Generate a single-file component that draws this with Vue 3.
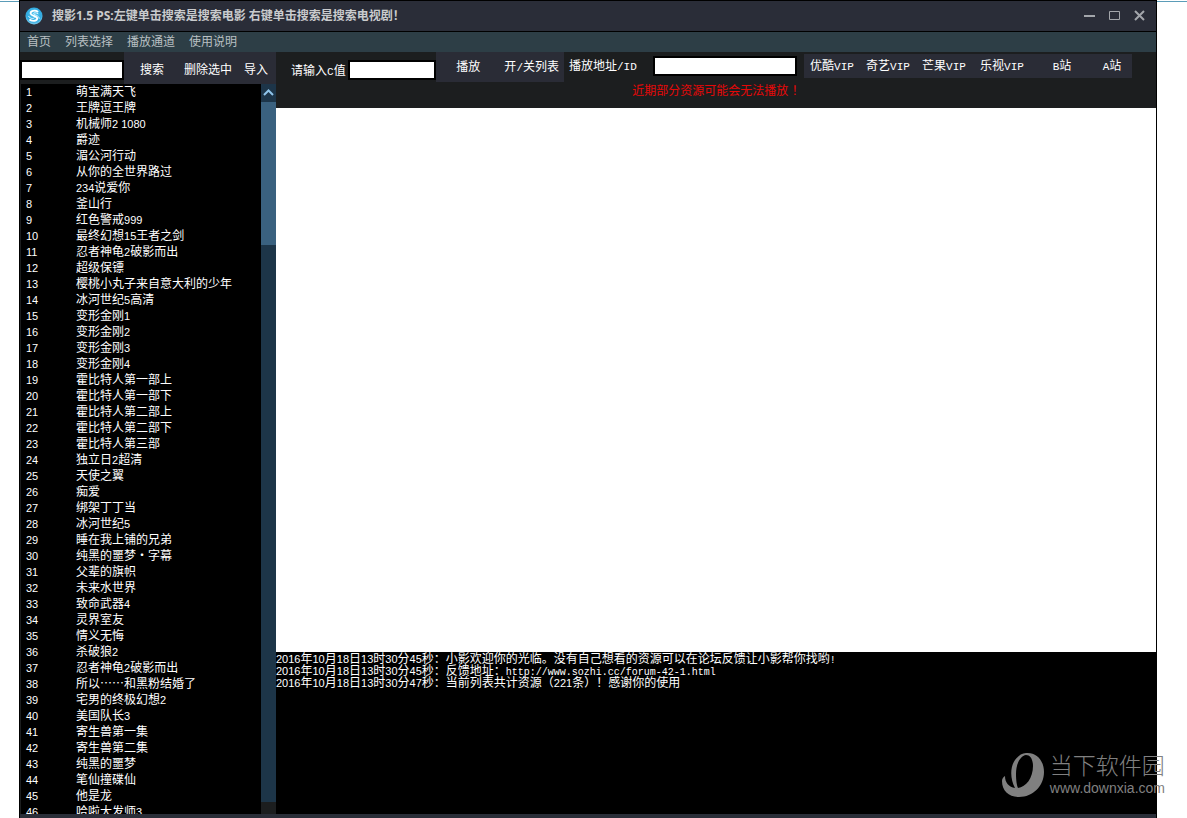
<script setup>
import { h, ref } from 'vue'

const menus = ['首页', '列表选择', '播放通道', '使用说明']

const vipButtons = [
  { label: '优酷VIP' },
  { label: '奇艺VIP' },
  { label: '芒果VIP' },
  { label: '乐视VIP', size: 'wide' },
  { label: 'B站', size: 'wide' },
  { label: 'A站', size: 'narrow' },
]

const movies = [
  '萌宝满天飞', '王牌逗王牌', '机械师2 1080', '爵迹', '湄公河行动', '从你的全世界路过',
  '234说爱你', '釜山行', '红色警戒999', '最终幻想15王者之剑', '忍者神龟2破影而出', '超级保镖',
  '樱桃小丸子来自意大利的少年', '冰河世纪5高清', '变形金刚1', '变形金刚2', '变形金刚3', '变形金刚4',
  '霍比特人第一部上', '霍比特人第一部下', '霍比特人第二部上', '霍比特人第二部下', '霍比特人第三部',
  '独立日2超清', '天使之翼', '痴爱', '绑架丁丁当', '冰河世纪5', '睡在我上铺的兄弟', '纯黑的噩梦・字幕',
  '父辈的旗帜', '未来水世界', '致命武器4', '灵界室友', '情义无悔', '杀破狼2', '忍者神龟2破影而出',
  '所以……和黑粉结婚了', '宅男的终极幻想2', '美国队长3', '寄生兽第一集', '寄生兽第二集', '纯黑的噩梦',
  '笔仙撞碟仙', '他是龙', '哈啦大发师3',
]

const logs = [
  '2016年10月18日13时30分45秒：小影欢迎你的光临。没有自己想看的资源可以在论坛反馈让小影帮你找哟!',
  '2016年10月18日13时30分45秒：反馈地址：http://www.sozhi.cc/forum-42-1.html',
  '2016年10月18日13时30分47秒：当前列表共计资源（221条）！感谢你的使用',
]

const keyword = ref('')
const cValue = ref('')
const address = ref('')

// Sets half-width runs in half-width faces so they pair with full-width characters.
const MixedText = (props) =>
  props.text
    .split(/([\x20-\x7e]+|…+)/)
    .filter(Boolean)
    .map((run) => {
      if (/^…+$/.test(run)) return h('span', { class: 'run-wide' }, run)
      if (/^[\d ]+$/.test(run)) return h('span', { class: 'run-digits' }, run)
      if (/^[\x20-\x7e]+$/.test(run)) return h('span', { class: 'run-latin' }, run)
      return run
    })
MixedText.props = ['text']
</script>

<template>
  <div class="desktop">
    <div class="window">
      <header class="titlebar">
        <svg class="logo" viewBox="0 0 18 18" aria-hidden="true">
          <defs>
            <radialGradient id="orb" cx="50%" cy="40%" r="62%">
              <stop offset="0" stop-color="#55c8f2" />
              <stop offset="0.7" stop-color="#2fa9e0" />
              <stop offset="1" stop-color="#8fd6f2" />
            </radialGradient>
          </defs>
          <circle cx="9" cy="9" r="8.5" fill="url(#orb)" />
          <path d="M12.6 4.600C10 2.900 5.200 3.800 5.600 6.600C6 9 12 8.600 12.200 11.300C12.300 14 8 14.600 5 12.900" fill="none" stroke="#fff" stroke-width="1.800" stroke-linecap="round" />
          <path d="M13 6.600C11 5.400 8.400 5.600 8.600 6.700C9 8 14.400 8.400 14.200 11.400M3.600 9.300C4.600 11.600 8.800 12.200 9.400 10.900" fill="none" stroke="#e2f6ff" stroke-width="1" stroke-linecap="round" />
        </svg>
        <h1 class="title">搜影1.5 PS:左键单击搜索是搜索电影 右键单击搜索是搜索电视剧！</h1>
        <div class="window-buttons">
          <button type="button" aria-label="最小化">
            <svg viewBox="0 0 13 13"><path d="M1 6H12" stroke-width="2" /></svg>
          </button>
          <button type="button" aria-label="最大化">
            <svg viewBox="0 0 13 13"><path d="M1.500 1.500H11.500V9.500H1.500Z" stroke-width="1" /></svg>
          </button>
          <button type="button" aria-label="关闭">
            <svg viewBox="0 0 13 13"><path d="M2 1L11 10M11 1L2 10" stroke-width="2" /></svg>
          </button>
        </div>
      </header>

      <nav class="menubar">
        <button v-for="menu in menus" :key="menu" type="button">{{ menu }}</button>
      </nav>

      <div class="content">
        <aside class="sidebar">
          <form class="search" @submit.prevent>
            <input v-model="keyword" class="field" type="text" aria-label="搜索关键字" />
            <div class="search-buttons">
              <button type="submit">搜索</button>
              <button type="button">删除选中</button>
              <button type="button">导入</button>
            </div>
          </form>
          <div class="list-area">
            <div class="list">
              <table>
                <tbody>
                  <tr v-for="(movie, i) in movies" :key="i">
                    <td class="index"><MixedText :text="String(i + 1)" /></td>
                    <td><MixedText :text="movie" /></td>
                  </tr>
                </tbody>
              </table>
            </div>
            <div class="scrollbar">
              <button type="button" aria-label="向上滚动">
                <svg viewBox="0 0 15 18"><path d="M3 11L7.500 6.500L12 11" /></svg>
              </button>
              <div class="track"><div class="thumb"></div></div>
            </div>
          </div>
        </aside>

        <main class="main">
          <div class="toolbar">
            <label class="c-label" for="c-value"><MixedText text="请输入C值" /></label>
            <input id="c-value" v-model="cValue" class="field c-field" type="text" />
            <div class="play-buttons">
              <button type="button">播放</button>
              <button type="button"><MixedText text="开/关列表" /></button>
            </div>
            <label class="address-label" for="address"><MixedText text="播放地址/ID" /></label>
            <input id="address" v-model="address" class="field address-field" type="text" />
            <div class="vip-buttons">
              <button v-for="b in vipButtons" :key="b.label" type="button" :class="b.size">
                <MixedText :text="b.label" />
              </button>
            </div>
          </div>
          <p class="notice">近期部分资源可能会无法播放 ！</p>
          <section class="player" aria-label="播放区"></section>
          <section class="log" aria-label="日志">
            <p v-for="line in logs" :key="line"><MixedText :text="line" /></p>
          </section>
        </main>
      </div>
      <footer class="statusbar"></footer>
    </div>

    <div class="watermark">
      <svg viewBox="0 0 44 46" aria-hidden="true">
        <path fill-rule="evenodd" d="M24 1C34 0 42 8 42 20C42 34 31 45 17 45C7 45 0 39 0 29C0 27 1 25 3 24C3 31 7 35 13 36C8 27 8 15 13 8C16 4 20 1 24 1ZM24 3C18 4 14 12 14 22C14 29 15 34 16 36C24 35 31 26 31 14C31 7 28 3 24 3Z" />
      </svg>
      <div>
        <div class="watermark-name">当下软件园</div>
        <div class="watermark-url">www.downxia.com</div>
      </div>
    </div>
  </div>
</template>

<style>
body {
  margin: 0;
  background: #fff;
}
</style>

<style scoped>
.desktop {
  position: relative;
  box-sizing: border-box;
  height: 100vh;
  padding: 0 30px 0 19px;
  overflow: hidden;
  background: linear-gradient(#5b9cb8, #5b9cb8) 0 1px / 100% 1px no-repeat #fff;
  color: #fff;
  font-family: "Liberation Sans", "Noto Sans CJK SC", sans-serif;
  font-size: 12px;
}
.window {
  display: flex;
  flex-direction: column;
  box-sizing: border-box;
  height: 100%;
  border: 1px solid #000;
  border-bottom: 0;
  background: #1c1e1f;
}
button {
  margin: 0;
  padding: 0;
  border: 0;
  background: none;
  color: inherit;
  font: inherit;
  white-space: nowrap;
}
:deep(.run-digits) {
  font-size: 11px;
  white-space: pre;
}
:deep(.run-latin) {
  font-family: "Liberation Mono", monospace;
  font-size: 11px;
}
.log :deep(.run-latin) {
  font-size: 10px;
}
:deep(.run-wide) {
  font-family: "Noto Sans CJK SC", sans-serif;
  line-height: 10px;
}

.titlebar {
  display: flex;
  flex: none;
  align-items: center;
  height: 30px;
  padding: 0 10px 0 5px;
  border-bottom: 1px solid #000;
  background: #2a2d38;
}
.logo {
  width: 18px;
  height: 18px;
}
.title {
  flex: 1;
  margin: 0 0 0 9px;
  color: #c9cbcd;
  font-family: "Noto Sans", "Noto Sans CJK SC", sans-serif;
  font-size: 12px;
  font-weight: 700;
  line-height: 18px;
  white-space: nowrap;
}
.window-buttons {
  display: flex;
  gap: 12px;
}
.window-buttons button {
  display: flex;
}
.window-buttons svg {
  width: 13px;
  height: 13px;
  fill: none;
  stroke: #a3a6ab;
}

.menubar {
  display: flex;
  flex: none;
  gap: 14px;
  height: 20px;
  padding: 0 7px;
  background: #2d3e46;
  color: #b9c0c3;
  line-height: 20px;
}

.content {
  display: flex;
  flex: 1;
  min-height: 0;
}
.sidebar {
  display: flex;
  flex: none;
  flex-direction: column;
  width: 256px;
}
.search {
  display: flex;
  flex: none;
  align-items: flex-end;
  height: 32px;
}
.field {
  box-sizing: border-box;
  min-width: 0;
  height: 20px;
  padding: 0 2px;
  border: 2px solid #000;
  background: #fff;
  color: #000;
  font: inherit;
}
.search .field {
  width: 104px;
  margin-bottom: 4px;
}
.search-buttons {
  display: flex;
  flex: 1;
  gap: 12px;
  justify-content: flex-end;
  height: 100%;
  padding-right: 8px;
  background: #2a2c36;
}
.search-buttons button:first-child {
  margin-right: 8px;
}
.list-area {
  display: flex;
  flex: 1;
  min-height: 0;
}
.list {
  flex: 1;
  overflow: hidden;
  margin-left: 1px;
  background: #000;
}
table {
  width: 100%;
  border-spacing: 0;
}
td {
  height: 16px;
  padding: 0;
  line-height: 16px;
  white-space: nowrap;
}
.index {
  width: 50px;
  padding-left: 5px;
}
.scrollbar {
  display: flex;
  flex-direction: column;
  width: 15px;
  padding-bottom: 12px;
}
.scrollbar button {
  display: flex;
  background: #1d3549;
}
.scrollbar svg {
  width: 15px;
  height: 18px;
  fill: none;
  stroke: #8fc4ea;
  stroke-width: 2;
}
.track {
  flex: 1;
  background: #1d3548;
}
.thumb {
  height: 143px;
  background: #3a617f;
}

.main {
  display: flex;
  flex: 1;
  flex-direction: column;
  min-width: 0;
}
.toolbar {
  display: flex;
  flex: none;
  align-items: flex-start;
  height: 30px;
  line-height: 28px;
}
.c-label {
  width: 57px;
  padding-top: 5px;
  padding-left: 15px;
  white-space: nowrap;
}
.c-field {
  width: 88px;
  margin-top: 8px;
}
.play-buttons {
  display: flex;
  gap: 24px;
  justify-content: flex-end;
  width: 123px;
  height: 30px;
  padding-right: 5px;
  background: #2a2c36;
}
.address-label {
  width: 84px;
  padding-left: 5px;
  white-space: nowrap;
}
.address-field {
  width: 144px;
  margin-top: 4px;
}
.vip-buttons {
  display: flex;
  height: 24px;
  margin-top: 2px;
  margin-left: 7px;
  background: #2a2c36;
  line-height: 24px;
}
.vip-buttons button {
  width: 56px;
}
.vip-buttons .wide {
  width: 60px;
}
.vip-buttons .narrow {
  width: 40px;
}
.notice {
  flex: none;
  height: 26px;
  margin: 0;
  padding-left: 4px;
  color: #e60808;
  line-height: 18px;
  text-align: center;
}
.player {
  flex: 1;
  background: #fff;
}
.log {
  flex: none;
  box-sizing: border-box;
  height: 162px;
  padding-top: 1px;
  background: #000;
  line-height: 12px;
}
.log p {
  height: 12px;
  margin: 0;
  white-space: nowrap;
}
.statusbar {
  flex: none;
  height: 4px;
  background: #2a2e38;
}

.watermark {
  position: absolute;
  right: 22px;
  bottom: 20px;
  display: flex;
  gap: 4px;
  align-items: center;
  color: #808080;
}
.watermark svg {
  width: 44px;
  height: 46px;
  fill: #808080;
}
.watermark-name {
  font-size: 23px;
  font-weight: 300;
  line-height: 26px;
}
.watermark-url {
  font-size: 14px;
  line-height: 18px;
}
</style>
